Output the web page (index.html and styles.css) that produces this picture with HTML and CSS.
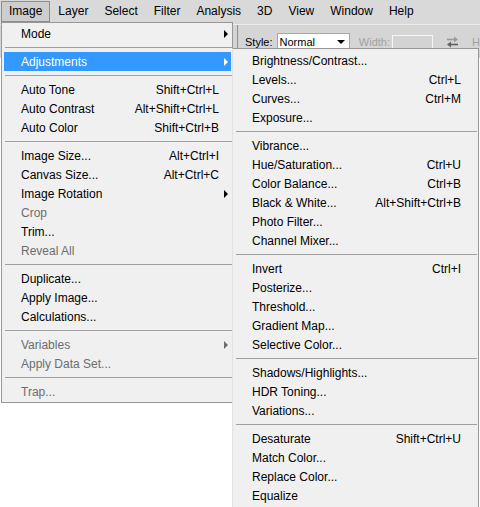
FILE: index.html
```html
<!DOCTYPE html>
<html>
<head>
<meta charset="utf-8">
<link rel="stylesheet" href="styles.css">
</head>
<body>
<div class="app">
  <nav class="menubar">
    <span class="mb-item active">Image</span>
    <span class="mb-item">Layer</span>
    <span class="mb-item">Select</span>
    <span class="mb-item">Filter</span>
    <span class="mb-item">Analysis</span>
    <span class="mb-item">3D</span>
    <span class="mb-item">View</span>
    <span class="mb-item">Window</span>
    <span class="mb-item">Help</span>
  </nav>
  <div class="options">
    <div class="opt-lead"></div>
    <span class="opt-label">Style:</span>
    <div class="select"><span>Normal</span><i class="caret"></i></div>
    <span class="opt-label dis w-label">Width:</span>
    <div class="field"></div>
    <svg class="swap" width="13" height="12" viewBox="0 0 13 12">
      <path d="M1 3.5h9" stroke="#9a9a9a" stroke-width="1.6"/>
      <path d="M8 0.5l4 3-4 3z" fill="#9a9a9a"/>
      <path d="M3 8.5h9" stroke="#606060" stroke-width="1.6"/>
      <path d="M5 5.5l-4 3 4 3z" fill="#606060"/>
    </svg>
    <span class="opt-label dis h-label">H</span>
  </div>
  <div class="doc"></div>

  <ul class="menu main">
    <li class="item has-sub"><span class="lb">Mode</span></li>
    <li class="sep"></li>
    <li class="item has-sub hl"><span class="lb">Adjustments</span></li>
    <li class="sep"></li>
    <li class="item"><span class="lb">Auto Tone</span><span class="sc">Shift+Ctrl+L</span></li>
    <li class="item"><span class="lb">Auto Contrast</span><span class="sc">Alt+Shift+Ctrl+L</span></li>
    <li class="item"><span class="lb">Auto Color</span><span class="sc">Shift+Ctrl+B</span></li>
    <li class="sep"></li>
    <li class="item"><span class="lb">Image Size...</span><span class="sc">Alt+Ctrl+I</span></li>
    <li class="item"><span class="lb">Canvas Size...</span><span class="sc">Alt+Ctrl+C</span></li>
    <li class="item has-sub"><span class="lb">Image Rotation</span></li>
    <li class="item dis"><span class="lb">Crop</span></li>
    <li class="item"><span class="lb">Trim...</span></li>
    <li class="item dis"><span class="lb">Reveal All</span></li>
    <li class="sep"></li>
    <li class="item"><span class="lb">Duplicate...</span></li>
    <li class="item"><span class="lb">Apply Image...</span></li>
    <li class="item"><span class="lb">Calculations...</span></li>
    <li class="sep"></li>
    <li class="item dis has-sub"><span class="lb">Variables</span></li>
    <li class="item dis"><span class="lb">Apply Data Set...</span></li>
    <li class="sep"></li>
    <li class="item dis"><span class="lb">Trap...</span></li>
  </ul>

  <ul class="menu sub">
    <li class="item"><span class="lb">Brightness/Contrast...</span></li>
    <li class="item"><span class="lb">Levels...</span><span class="sc">Ctrl+L</span></li>
    <li class="item"><span class="lb">Curves...</span><span class="sc">Ctrl+M</span></li>
    <li class="item"><span class="lb">Exposure...</span></li>
    <li class="sep"></li>
    <li class="item"><span class="lb">Vibrance...</span></li>
    <li class="item"><span class="lb">Hue/Saturation...</span><span class="sc">Ctrl+U</span></li>
    <li class="item"><span class="lb">Color Balance...</span><span class="sc">Ctrl+B</span></li>
    <li class="item"><span class="lb">Black &amp; White...</span><span class="sc">Alt+Shift+Ctrl+B</span></li>
    <li class="item"><span class="lb">Photo Filter...</span></li>
    <li class="item"><span class="lb">Channel Mixer...</span></li>
    <li class="sep"></li>
    <li class="item"><span class="lb">Invert</span><span class="sc">Ctrl+I</span></li>
    <li class="item"><span class="lb">Posterize...</span></li>
    <li class="item"><span class="lb">Threshold...</span></li>
    <li class="item"><span class="lb">Gradient Map...</span></li>
    <li class="item"><span class="lb">Selective Color...</span></li>
    <li class="sep"></li>
    <li class="item"><span class="lb">Shadows/Highlights...</span></li>
    <li class="item"><span class="lb">HDR Toning...</span></li>
    <li class="item"><span class="lb">Variations...</span></li>
    <li class="sep"></li>
    <li class="item"><span class="lb">Desaturate</span><span class="sc">Shift+Ctrl+U</span></li>
    <li class="item"><span class="lb">Match Color...</span></li>
    <li class="item"><span class="lb">Replace Color...</span></li>
    <li class="item"><span class="lb">Equalize</span></li>
  </ul>
</div>
</body>
</html>
```
FILE: styles.css
```css
* { box-sizing: border-box; margin: 0; padding: 0; }
html, body { width: 480px; height: 507px; overflow: hidden; }
body {
  background: #fff;
  font-family: "Liberation Sans", Arial, sans-serif;
  font-size: 12px;
  color: #000;
}
.app { position: relative; height: 507px; display: flex; flex-direction: column; }

.menubar {
  height: 24px;
  flex: none;
  background: #d9d9d9;
  display: flex;
  padding: 1px 0 2px 1px;
}
.mb-item {
  border: 1px solid transparent;
  padding: 0 7px;
  line-height: 19px;
  white-space: nowrap;
}
.mb-item.active { background: #cdcdcd; border-color: #8e8e8e; }

.options {
  height: 34px;
  flex: none;
  background: #d5d5d5;
  border-top: 1px solid #ececec;
  display: flex;
  align-items: center;
  font-size: 11px;
}
.opt-lead { width: 238px; align-self: stretch; border-right: 1px solid #8f8f8f; flex: none; }
.opt-label { margin-left: 7px; white-space: nowrap; }
.opt-label.dis { color: #a3a3a3; }
.select {
  margin-left: 4px;
  width: 75px;
  height: 18px;
  background: #fff;
  border: 1px solid #a8a8a8;
  display: flex;
  align-items: center;
  padding-left: 2px;
}
.select span { flex: 1; }
.caret {
  width: 0; height: 0;
  border-left: 4px solid transparent;
  border-right: 4px solid transparent;
  border-top: 4px solid #000;
  margin-right: 4px;
}
.w-label { margin-left: 9px; }
.field {
  margin-left: 2px;
  width: 42px;
  height: 14px;
  background: #d3d3d3;
  border: 1px solid #f6f6f6;
}
.swap { margin-left: 13px; flex: none; }
.h-label { margin-left: 13px; }
.doc { flex: 1; background: #fff; }

.menu {
  position: absolute;
  list-style: none;
  background: #f0f0f0;
  border: 1px solid #979797;
}
.main { left: 1px; top: 22px; width: 232px; padding: 1px 1px 1px 2px; }
.sub {
  left: 232px; top: 48px; width: 247px;
  padding: 2px 2px 0 2px;
  border-left-color: #e2e2e2;
  border-bottom: none;
  height: 470px;
}
.item {
  height: 19px;
  display: flex;
  align-items: center;
  padding-left: 17px;
  white-space: nowrap;
}
.sub .item { padding-right: 3px; }
.item .lb { flex: 1; }
.item::after { content: ""; width: 12px; flex: none; }
.item.has-sub::after {
  width: 0; height: 0;
  border-top: 4px solid transparent;
  border-bottom: 4px solid transparent;
  border-left: 4px solid #000;
  margin-left: 5px;
  margin-right: 3px;
}
.item.hl { background: #3399ff; color: #fff; }
.item.hl.has-sub::after { border-left-color: #fff; }
.item.dis { color: #6d6d6d; }
.item.dis.has-sub::after { border-left-color: #6d6d6d; }

.sep { height: 9px; padding-top: 4px; margin-left: 1px; margin-right: -1px; }
.sep::before { content: ""; display: block; height: 1px; background: #a0a0a0; }
```
